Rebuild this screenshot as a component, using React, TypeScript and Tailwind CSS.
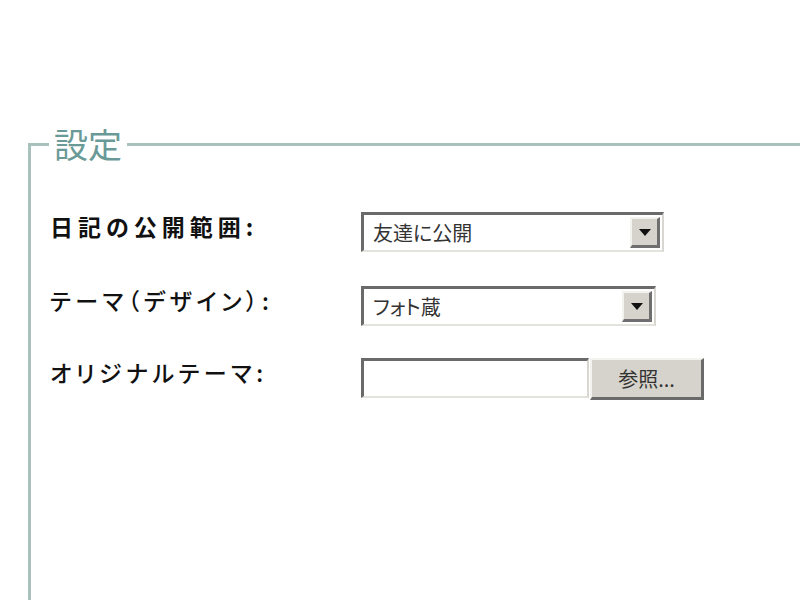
import React from "react";

const jp = "font-['Noto_Sans_CJK_JP','Noto_Sans_CJK_SC',sans-serif]";

function Arrow() {
  return (
    <div className="flex h-[31px] w-[30px] items-center justify-center border-t-2 border-l-2 border-b-[3px] border-r-[3px] border-t-[#f4f2ee] border-l-[#f4f2ee] border-b-[#6f6f6f] border-r-[#6f6f6f] bg-[#d6d3cc]">
      <svg width="12" height="7" viewBox="0 0 12 7">
        <polygon points="0,0 12,0 6,7" fill="#111" />
      </svg>
    </div>
  );
}

function Select({ value, width }: { value: string; width: string }) {
  return (
    <div
      className={`flex h-[40px] ${width} items-center justify-between border-t-[3px] border-l-[3px] border-b-2 border-r-2 border-t-[#6a6a6a] border-l-[#6a6a6a] border-b-[#e4e2dc] border-r-[#d8d6d0] bg-white pl-[9px] pr-[2px]`}
    >
      <span className={`${jp} text-[20px] leading-none text-[#333] [font-feature-settings:'palt']`}>{value}</span>
      <Arrow />
    </div>
  );
}

export default function App() {
  return (
    <div className="h-[600px] w-[800px] overflow-hidden bg-white">
      <fieldset className="ml-[28px] mt-[127px] h-[520px] w-[820px] border-[3px] border-[#a9c1bd] pl-[19px]">
        <legend className={`${jp} ml-[-1px] px-[5px] text-[34px] leading-[34px] text-[#6a9a97]`}>設定</legend>
        <div className="flex flex-col pt-[51px]">
          <div className="flex h-[40px] items-start">
            <div className={`${jp} mt-[-3px] w-[311px] text-[23px] font-bold tracking-[5px] text-[#111] [font-feature-settings:'palt']`}>日記の公開範囲:</div>
            <Select value="友達に公開" width="w-[303px]" />
          </div>
          <div className="mt-[34px] flex h-[40px] items-start">
            <div className={`${jp} mt-[-3px] w-[311px] text-[23px] font-medium tracking-[4.5px] text-[#111] [font-feature-settings:'palt']`}>テーマ（デザイン）:</div>
            <Select value="フォト蔵" width="w-[295px]" />
          </div>
          <div className="mt-[32px] flex h-[42px] items-start">
            <div className={`${jp} mt-[-3px] w-[311px] text-[23px] font-medium tracking-[4.5px] text-[#111] [font-feature-settings:'palt']`}>オリジナルテーマ:</div>
            <div className="h-[40px] w-[228px] border-t-[3px] border-l-[3px] border-b-2 border-r-2 border-t-[#6a6a6a] border-l-[#6a6a6a] border-b-[#e4e2dc] border-r-[#d8d6d0] bg-white" />
            <button className={`${jp} ml-[1px] flex h-[42px] w-[114px] items-center justify-center border-t-2 border-l-2 border-b-[3px] border-r-[3px] border-t-[#f4f2ee] border-l-[#f4f2ee] border-b-[#6a6a6a] border-r-[#6a6a6a] bg-[#d6d3cc] text-[20px] text-[#333]`}>参照...</button>
          </div>
        </div>
      </fieldset>
    </div>
  );
}
